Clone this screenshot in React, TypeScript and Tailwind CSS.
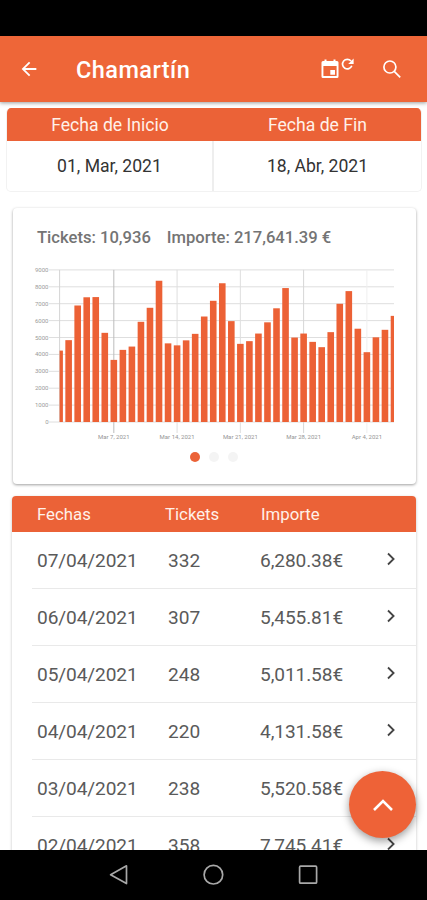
import { clsx } from 'clsx';

interface DayRow {
  date: string;
  tickets: number;
  amount: string;
}

const rows: DayRow[] = [
  { date: '07/04/2021', tickets: 332, amount: '6,280.38€' },
  { date: '06/04/2021', tickets: 307, amount: '5,455.81€' },
  { date: '05/04/2021', tickets: 248, amount: '5,011.58€' },
  { date: '04/04/2021', tickets: 220, amount: '4,131.58€' },
  { date: '03/04/2021', tickets: 238, amount: '5,520.58€' },
  { date: '02/04/2021', tickets: 358, amount: '7,745.41€' },
];

// daily totals, 1 March to 7 April
const daily = [
  4226, 4843, 6894, 7380, 7392, 5276, 3675, 4268, 4464, 5928, 6758, 8358, 4653,
  4535, 4831, 5216, 6242, 7172, 8210, 5969, 4624, 4784, 5234, 5898, 6728, 7925,
  4997, 5234, 4742, 4428, 5317, 6995, 7745, 5520, 4131, 5011, 5455, 6280,
];

const weeks = [
  { index: 6, label: 'Mar 7, 2021', color: '#bdbdbd' },
  { index: 13, label: 'Mar 14, 2021', color: '#dedede' },
  { index: 20, label: 'Mar 21, 2021', color: '#dedede' },
  { index: 27, label: 'Mar 28, 2021', color: '#d6d6d6' },
  { index: 34, label: 'Apr 4, 2021', color: '#efefef' },
];

const LEFT = 46.6;
const RIGHT = 381;
const BASE = 162;
const STEP = (RIGHT - LEFT) / (daily.length - 1);
const BAR = 6.6;

const yOf = (v: number) => BASE - (v / 1000) * 16.9;

function Chart() {
  return (
    <svg width="403" height="184" viewBox="0 0 403 184" className="block" fontFamily="Roboto, sans-serif">
      {Array.from({ length: 10 }, (_, i) => i * 1000).map(v => (
        <g key={v}>
          <line x1="36" x2={RIGHT} y1={yOf(v)} y2={yOf(v)} stroke="#dedede" strokeWidth="1" />
          <text x="35.5" y={yOf(v) + 2} fontSize="6" fill="#9a9a9a" textAnchor="end">{v}</text>
        </g>
      ))}
      <line x1={LEFT} x2={LEFT} y1={yOf(9000)} y2={BASE} stroke="#d4d4d4" />
      {weeks.map(w => (
        <g key={w.label}>
          <line x1={LEFT + w.index * STEP} x2={LEFT + w.index * STEP} y1={yOf(9000)} y2={BASE + 11} stroke={w.color} />
          <text x={LEFT + w.index * STEP} y="179.3" fontSize="6" fill="#959595" textAnchor="middle">{w.label}</text>
        </g>
      ))}
      {daily.map((v, i) => {
        const x = LEFT + i * STEP;
        const x0 = Math.max(x - BAR / 2, LEFT);
        const x1 = Math.min(x + BAR / 2, RIGHT);
        return <rect key={i} x={x0} y={yOf(v)} width={x1 - x0} height={BASE - yOf(v)} fill="#ec6135" />;
      })}
    </svg>
  );
}

function AppBar() {
  return (
    <header className="relative z-10 flex h-[66px] shrink-0 items-center bg-[#ee6638] text-white shadow-[0_1px_4px_rgba(0,0,0,0.4)]">
      <svg width="22" height="22" viewBox="0 0 24 24" className="ml-[18px]" fill="currentColor">
        <path d="M20 11H7.83l5.59-5.59L12 4l-8 8 8 8 1.41-1.41L7.83 13H20v-2z" />
      </svg>
      <h1 className="ml-[36px] mt-[3px] text-[23.5px] leading-none font-medium tracking-[0.45px]">Chamartín</h1>
      <div className="ml-auto mr-[24px] flex items-center">
        <svg width="36" height="24" viewBox="0 0 36 24" fill="currentColor">
          <path fillRule="evenodd" d="M4 4h1.500V2.400h2V4h7V2.400h2V4H18q1.500 0 1.500 1.500v14q0 1.500-1.500 1.500H4q-1.500 0-1.500-1.500v-14Q2.500 4 4 4zM4.400 9v10h13.200V9zM11.300 13h4.700v4.800h-4.700z" />
          <path d="M32 4A4.800 4.800 0 1 0 32.800 8.800" fill="none" stroke="currentColor" strokeWidth="1.700" />
          <path d="M34.600 1.600v5.400h-5.400z" />
        </svg>
        <svg width="22" height="22" viewBox="0 0 22 22" className="ml-[26px]" fill="none" stroke="currentColor" strokeWidth="1.7">
          <circle cx="8.900" cy="9" r="6" />
          <path d="M13.200 13.300l6 6" />
        </svg>
      </div>
    </header>
  );
}

function DateRange() {
  return (
    <section className="ml-1.5 mt-1.5 h-[84px] w-[416px] shrink-0 overflow-hidden rounded-[5px] border border-t-0 border-[#f2f2f2] text-center text-[17.6px]">
      <div className="grid h-[33px] grid-cols-2 items-center bg-[#eb6237] pt-px text-[#fff1e9]">
        <span className="-ml-px">Fecha de Inicio</span>
        <span>Fecha de Fin</span>
      </div>
      <div className="grid h-[50px] grid-cols-2 items-stretch text-[#333]">
        <span className="flex items-center justify-center border-r-2 border-[#eeeeee]">01, Mar, 2021</span>
        <span className="flex items-center justify-center">18, Abr, 2021</span>
      </div>
    </section>
  );
}

function Summary() {
  return (
    <section className="ml-[12.5px] mt-4 h-[276px] w-[403px] shrink-0 rounded-[4px] bg-white shadow-[0_1px_3px_rgba(0,0,0,0.38)]">
      <div className="flex h-[52px] items-center gap-4 pl-[24.5px] pt-[9px] text-[16.6px] font-medium text-[#747474]">
        <span>Tickets: 10,936</span>
        <span>Importe: 217,641.39 €</span>
      </div>
      <Chart />
      <div className="mt-[8px] flex items-center gap-[9px] pl-[177px]">
        {[0, 1, 2].map(i => (
          <i key={i} className={clsx('size-[10px] rounded-full', i === 0 ? 'bg-[#eb6237]' : 'bg-[#f4f4f4]')} />
        ))}
      </div>
    </section>
  );
}

function DayTable() {
  return (
    <section className="ml-3 mt-3 w-[404px] shrink-0 rounded-[4px] bg-white shadow-[0_1px_3px_rgba(0,0,0,0.25)]">
      <div className="grid h-9 grid-cols-[128px_96px_1fr] items-center rounded-t-[4px] bg-[#eb6237] pl-[25px] pt-px text-[16.8px] text-[#fff1e9]">
        <span>Fechas</span>
        <span>Tickets</span>
        <span>Importe</span>
      </div>
      {rows.map(r => (
        <div
          key={r.date}
          className="ml-5 grid h-[57px] grid-cols-[131px_92px_1fr_24px] items-center border-b border-[#e9e9e9] pl-[5px] pt-[2px] text-[19.1px] text-[#5a5a5a]"
        >
          <span className="tracking-[-0.1px]">{r.date}</span>
          <span>{r.tickets}</span>
          <span className="tracking-[-0.1px]">{r.amount}</span>
          <svg width="10" height="14" viewBox="0 0 10 14" className="-ml-[6px] -mt-1" fill="none" stroke="#444" strokeWidth="1.8">
            <path d="M2 1.500L7.600 7 2 12.500" />
          </svg>
        </div>
      ))}
    </section>
  );
}

function NavBar() {
  return (
    <nav className="flex h-[50px] shrink-0 items-center justify-center bg-black text-[#a8a8a8]">
      <svg width="210" height="24" viewBox="0 0 210 24" className="-ml-px" fill="none" stroke="currentColor" strokeWidth="1.7" strokeLinejoin="round">
        <path d="M18.500 2.800v17.800L2.600 11.700z" />
        <circle cx="105.400" cy="11.700" r="9.300" />
        <rect x="191.600" y="3.200" width="17" height="17" rx="1" />
      </svg>
    </nav>
  );
}

export default function App() {
  return (
    <div className="flex h-[900px] w-[427px] flex-col overflow-hidden bg-white font-['Roboto',sans-serif]">
      <div className="h-9 shrink-0 bg-black" />
      <AppBar />
      <main className="relative flex min-h-0 flex-1 flex-col overflow-hidden">
        <DateRange />
        <Summary />
        <DayTable />
        <button className="absolute right-[11px] bottom-[12px] flex size-[67px] items-center justify-center rounded-full bg-[#ee6237] shadow-[0_3px_8px_rgba(0,0,0,0.4)]">
          <svg width="22" height="14" viewBox="0 0 22 14" fill="none" stroke="#fff" strokeWidth="2.6">
            <path d="M2 12l9-9 9 9" />
          </svg>
        </button>
      </main>
      <NavBar />
    </div>
  );
}
